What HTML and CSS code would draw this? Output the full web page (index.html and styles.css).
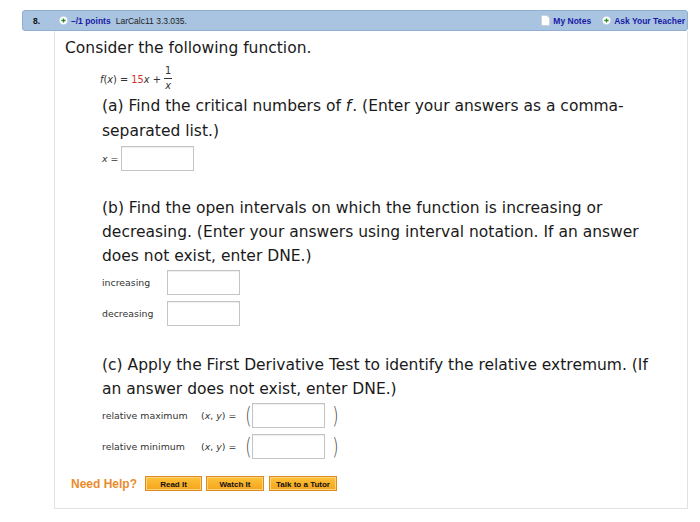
FILE: index.html
```html
<!DOCTYPE html>
<html>
<head>
<meta charset="utf-8">
<link rel="stylesheet" href="styles.css">
</head>
<body>
<div class="question">
  <div class="qhead">
    <span class="qnum">8.</span>
    <span class="plus"><svg width="9" height="9" viewBox="0 0 9 9"><circle cx="4.5" cy="4.5" r="4.2" fill="#fff" stroke="#b8c4d0" stroke-width="0.6"/><path d="M4.5 2.4v4.2M2.4 4.5h4.2" stroke="#2a8a2a" stroke-width="1.3"/></svg></span>
    <span class="points">–/1 points</span>
    <span class="ref">LarCalc11 3.3.035.</span>
    <span class="spacer"></span>
    <span class="note"><svg width="9" height="11" viewBox="0 0 9 11"><path d="M0.5 0.5h5.5l2.5 2.5v7.5h-8z" fill="#fff" stroke="#c8ccd2" stroke-width="0.7"/></svg></span>
    <span class="link">My Notes</span>
    <span class="plus plus2"><svg width="9" height="9" viewBox="0 0 9 9"><circle cx="4.5" cy="4.5" r="4.2" fill="#fff" stroke="#b8c4d0" stroke-width="0.6"/><path d="M4.5 2.4v4.2M2.4 4.5h4.2" stroke="#2a8a2a" stroke-width="1.3"/></svg></span>
    <span class="link">Ask Your Teacher</span>
  </div>
  <div class="qbody">
    <p class="intro">Consider the following function.</p>
    <div class="func">
      <span><i>f</i>(<i>x</i>) = <span class="red">15</span><i>x</i> + </span>
      <span class="frac"><span class="num">1</span><span class="den"><i>x</i></span></span>
    </div>
    <div class="part parta">
      <div class="ptext"><span class="line">(a) Find the critical numbers of <i class="fi">f</i>. (Enter your answers as a comma-</span><span class="line">separated list.)</span></div>
      <div class="row rowx"><span class="small"><i>x</i> =</span><span class="box"></span></div>
    </div>
    <div class="part partb">
      <p class="ptext">(b) Find the open intervals on which the function is increasing or decreasing. (Enter your answers using interval notation. If an answer does not exist, enter DNE.)</p>
      <div class="row rowb"><span class="small lbl">increasing</span><span class="box"></span></div>
      <div class="row rowb"><span class="small lbl">decreasing</span><span class="box"></span></div>
    </div>
    <div class="part partc">
      <p class="ptext">(c) Apply the First Derivative Test to identify the relative extremum. (If an answer does not exist, enter DNE.)</p>
      <div class="row rowc"><span class="small lbl2">relative maximum</span><span class="small xy">(<i>x</i>, <i>y</i>) =</span><span class="paren">(</span><span class="box"></span><span class="paren rp">)</span></div>
      <div class="row rowc"><span class="small lbl2">relative minimum</span><span class="small xy">(<i>x</i>, <i>y</i>) =</span><span class="paren">(</span><span class="box"></span><span class="paren rp">)</span></div>
    </div>
    <div class="help">
      <span class="needhelp">Need Help?</span>
      <span class="btn b1">Read It</span>
      <span class="btn b2">Watch It</span>
      <span class="btn b3">Talk to a Tutor</span>
    </div>
  </div>
</div>
</body>
</html>
```
FILE: styles.css
```css
html, body { margin: 0; padding: 0; background: #fff; }
body { font-family: "DejaVu Sans", Verdana, sans-serif; color: #222; }
.question { margin: 10px 0 0 22px; width: 666px; }
.qhead {
  height: 21px; display: flex; align-items: center;
  background: #a8c4e0; border: 1px solid #90aed0; border-radius: 3px;
  font-family: "Liberation Sans", Arial, sans-serif; font-size: 8.5px; font-weight: bold;
  color: #1a1aa6; padding: 0 2px 0 10px; box-sizing: border-box;
}
.qnum { color: #111; width: 26px; }
.plus { display: flex; margin-right: 3px; }
.points { margin-right: 5px; }
.ref { color: #222; font-weight: normal; }
.spacer { flex: 1; }
.note { display: flex; margin-right: 3px; }
.plus2 { margin-left: 11px; margin-right: 3px; }
.qbody {
  margin-left: 32px; border: 1px solid #e2e2e2; border-top: none;
  height: 478px; box-sizing: border-box; padding: 7px 0 0 10px;
}
.intro { margin: 0; font-size: 15.5px; line-height: 20px; color: #1a1a1a; }
.func { display: flex; align-items: center; margin: 7px 0 0 35px; font-size: 9.8px; color: #333; height: 28px; }
.red { color: #d0342c; }
.frac { display: inline-flex; flex-direction: column; align-items: center; margin-left: 3px; }
.num { border-bottom: 1px solid #333; padding: 0 1px 2px; line-height: 11px; }
.den { line-height: 14px; }
.part { margin-left: 37px; }
.parta { margin-top: 1px; }
.ptext { margin: 0; font-size: 15.5px; line-height: 25px; color: #1a1a1a; width: 560px; }
.partb .ptext, .partc .ptext { line-height: 24px; }
.line { display: block; }
.fi { margin-right: 1px; }
.row { display: flex; align-items: center; }
.small { font-size: 9.4px; color: #333; }
.box { display: block; width: 71px; height: 23px; border: 1px solid #c4c4c4; box-shadow: inset 0 1px 1px #eee; background: #fff; }
.rowx { margin-top: 2px; }
.rowx .small { width: 19px; }
.partb { margin-top: 25px; }
.rowb { margin-top: 2px; }
.rowb + .rowb { margin-top: 6px; }
.lbl { width: 65px; }
.partc { margin-top: 27px; }
.rowc { margin-top: 2px; }
.rowc + .rowc { margin-top: 6px; }
.lbl2 { width: 99px; }
.xy { width: 43px; }
.paren { font-size: 23px; font-weight: 100; color: #444; line-height: 24px; transform: scaleX(0.7); width: 8px; }
.rp { margin-left: 6px; }
.help { display: flex; align-items: center; margin: 17px 0 0 6px; }
.needhelp { font-family: "Liberation Sans", Arial, sans-serif; font-size: 12px; font-weight: bold; color: #ea8c2c; margin-right: 8px; }
.btn {
  font-family: "Liberation Sans", Arial, sans-serif; font-size: 8px; font-weight: bold; color: #111;
  background: linear-gradient(#fcc23a, #f6a41c); border: 1px solid #e0891e;
  box-shadow: inset 0 0 0 1px #fbd57d; height: 15px; line-height: 15px; box-sizing: border-box;
  margin-right: 4px; text-align: center;
}
.b1 { width: 57px; }
.b2 { width: 58px; margin-right: 5px; }
.b3 { width: 68px; }
```
